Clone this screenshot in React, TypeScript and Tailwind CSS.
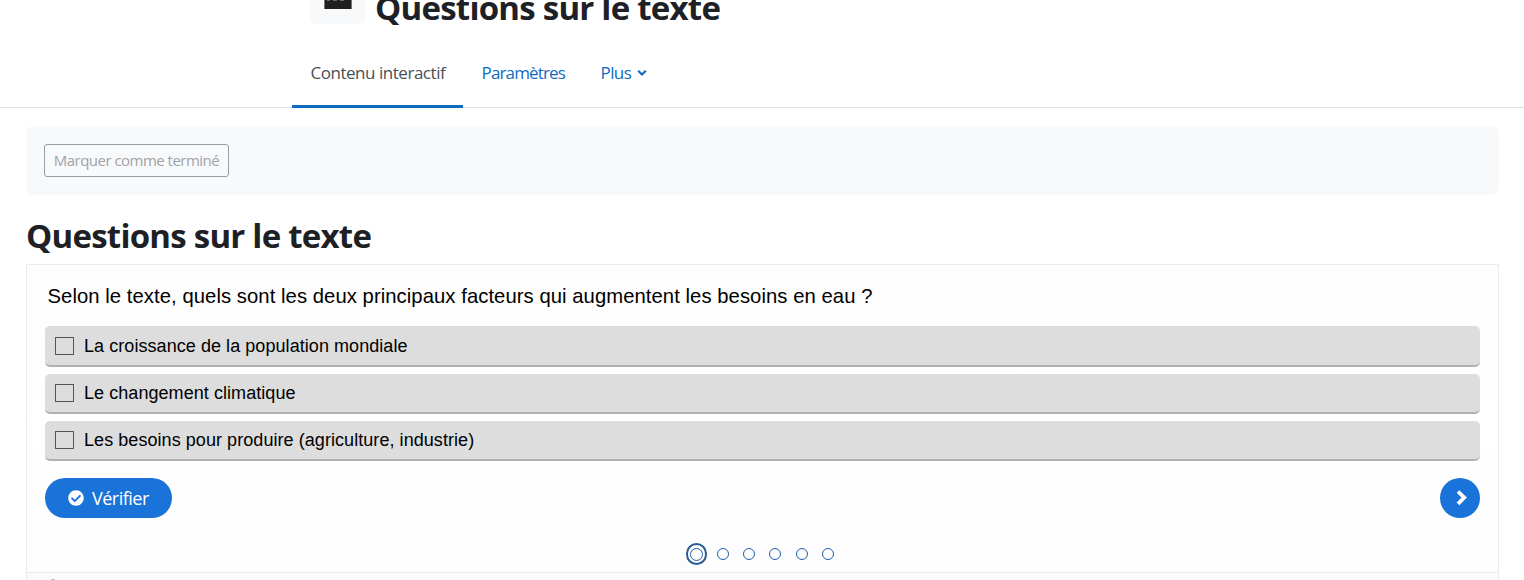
import { FaCheckCircle } from 'react-icons/fa';

const answers = [
  'La croissance de la population mondiale',
  'Le changement climatique',
  'Les besoins pour produire (agriculture, industrie)',
];

const steps = [1, 2, 3, 4, 5, 6];

function ActivityIcon() {
  return (
    <div className="flex h-14 w-14 justify-center rounded-md bg-[#f8f9fb]">
      <svg width="28" height="41" viewBox="0 0 28 41">
        <rect x="0" y="13" width="28" height="28" fill="#1f1f1f" />
        <path d="M0.5 13v28M27.5 13v28" stroke="#777" strokeWidth="1" />
        <path d="M3 32.5h3M9 32.5h4M16 32.5h4" stroke="#666" strokeWidth="1" />
      </svg>
    </div>
  );
}

function Header() {
  return (
    <header className="h-[108px] border-b border-[#dee2e6]">
      <div className="flex h-6 items-end pl-[310px]">
        <ActivityIcon />
        <h1 className="-mb-1 ml-[9px] whitespace-nowrap text-[33px] font-bold leading-10 tracking-[-0.76px] text-[#1d2125]">
          Questions sur le texte
        </h1>
      </div>
      <nav className="ml-[292px] mt-3.5 flex h-[70px] text-[17px] text-[#0f6cbf]">
        <a className="flex w-[171px] items-center border-b-3 border-[#0f6cbf] pl-[18.5px] pt-0.5 tracking-[-0.47px] text-[#495057]">
          Contenu interactif
        </a>
        <a className="flex w-[119px] items-center border-b-3 border-transparent pl-[18.5px] pt-0.5 tracking-[-0.85px]">
          Paramètres
        </a>
        <a className="flex items-center border-b-3 border-transparent pl-[18.5px] pt-0.5 tracking-[-0.6px]">
          Plus
          <svg className="ml-[6px]" width="10" height="8" viewBox="0 0 10 8" fill="none">
            <path d="M1.2 1.8L5 5.5L8.8 1.8" stroke="currentColor" strokeWidth="2.2" />
          </svg>
        </a>
      </nav>
    </header>
  );
}

function Answer({ label }: { label: string }) {
  return (
    <li className="flex h-10 items-center rounded-[5px] border-b-2 border-[#b0b0b0] bg-[#dddddd] pl-[10px] text-lg tracking-[0.06px] text-black first:h-[41px] first:pt-px">
      <span className="h-[18px] w-[19px] border border-[#555]" />
      <span className="ml-[10px]">{label}</span>
    </li>
  );
}

function Quiz() {
  return (
    <section className="ml-[26px] mr-[25px] mt-[7px] h-[316px] border border-b-0 border-[#ececec] bg-linear-to-b from-[#fdfdfd] via-white to-[#fdfdfd] font-['Liberation_Sans',sans-serif]">
      <div className="h-[308px] border-b border-[#ececec] px-[18px] pt-[18px]">
        <p className="pl-[2.5px] text-[20.25px] leading-[26px] tracking-[0.06px] text-black">
          Selon le texte, quels sont les deux principaux facteurs qui augmentent les besoins en eau ?
        </p>
        <ul className="mt-[17px] flex flex-col gap-[7px]">
          {answers.map((label) => (
            <Answer key={label} label={label} />
          ))}
        </ul>
        <div className="mt-[17px] flex justify-between">
          <button className="flex h-10 w-[127px] items-center rounded-full bg-[#1a73d9] pl-[23px] font-['Open_Sans',sans-serif] text-[18px] tracking-[-0.5px] text-white">
            <FaCheckCircle size={16} />
            <span className="ml-2">Vérifier</span>
          </button>
          <button className="flex h-10 w-10 items-center justify-center rounded-full bg-[#1a73d9] pl-[3px] text-white">
            <svg width="12" height="18" viewBox="0 0 12 18" fill="none">
              <path d="M2 2.5L8.2 8.6L2 14.8" stroke="currentColor" strokeWidth="3.8" />
            </svg>
          </button>
        </div>
        <div className="mt-[25px] flex h-[22px] items-center justify-center gap-[14.3px] pr-[5px]">
          {steps.map((step) =>
            step === 1 ? (
              <span key={step} className="-mr-[4.5px] flex h-[22px] w-[21px] items-center justify-center rounded-full border-2 border-[#2b5a92]">
                <span className="h-[13px] w-[13px] shrink-0 rounded-full border border-[#1f60ad]" />
              </span>
            ) : (
              <span key={step} className="h-3 w-3 rounded-full border border-[#1f60ad]" />
            )
          )}
        </div>
      </div>
      <footer className="h-[7px] overflow-hidden bg-[#fafafa] pl-6 pt-1.5">
        <div className="h-1 w-1 rounded-full bg-[#aaa]" />
      </footer>
    </section>
  );
}

export default function App() {
  return (
    <div className="h-[580px] overflow-hidden bg-white font-['Open_Sans',sans-serif]">
      <Header />
      <div className="ml-[26px] mr-[25px] mt-[18px] flex h-[69px] items-center rounded-lg bg-[#f8f9fb] pl-[18px]">
        <button className="h-[33px] w-[185px] whitespace-nowrap rounded-[3px] border border-[#9a9da6] text-[15px] tracking-[-0.52px] text-[#a0a3a8]">
          Marquer comme terminé
        </button>
      </div>
      <h2 className="ml-[26px] mt-[21px] whitespace-nowrap pb-px text-[33px] font-bold leading-10 tracking-[-0.76px] text-[#1d2125]">
        Questions sur le texte
      </h2>
      <Quiz />
    </div>
  );
}
